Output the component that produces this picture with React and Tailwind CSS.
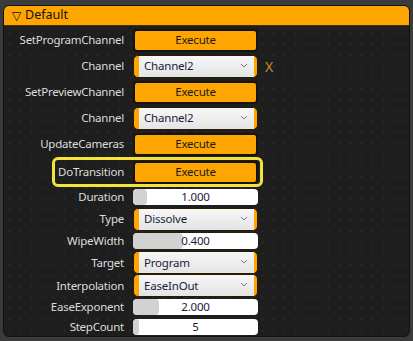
import React from "react";

const font = { fontFamily: '"Noto Sans", "Segoe UI", sans-serif' };

function Label({ children }) {
  return <div className="w-[120px] shrink-0 text-right text-[11.5px] tracking-[-0.25px] text-[#dcdcdc] leading-none">{children}</div>;
}

function ExecButton() {
  return (
    <div className="w-[125px] h-[23px] shrink-0 rounded-[4px] border-2 border-[#141414] bg-[#ffa500] flex items-center justify-center text-[11.5px] tracking-[-0.2px] text-[#1a1a1a]">
      Execute
    </div>
  );
}

function Dropdown({ value }) {
  return (
    <div className="w-[125px] h-[23px] shrink-0 rounded-[5px] bg-[#ffa500] border border-[#2a1a00] flex pl-[5px] pr-[3px]">
      <div className="flex-1 flex items-center justify-between bg-gradient-to-b from-[#f7f7f7] to-[#e4e4e4] pl-[5px] pr-[6px]">
        <span className="text-[11.5px] tracking-[-0.2px] text-[#1b1b3a]">{value}</span>
        <svg width="8" height="5" viewBox="0 0 8 5" className="mt-[-2px]">
          <path d="M1 1 L4 4 L7 1" fill="none" stroke="#777" strokeWidth="1" />
        </svg>
      </div>
    </div>
  );
}

function Slider({ value, fill }) {
  return (
    <div className="relative w-[125px] h-[16px] shrink-0 rounded-[4px] bg-white flex items-center justify-center overflow-hidden">
      <div className="absolute left-0 top-0 bottom-0 rounded-[4px] bg-[#d2d2d2]" style={{ width: fill }} />
      <span className="relative text-[11.5px] tracking-[-0.2px] text-[#1b1b3a]">{value}</span>
    </div>
  );
}

function Row({ h, label, children }) {
  return (
    <div className={`flex items-center gap-[9px] ${h}`}>
      <Label>{label}</Label>
      {children}
    </div>
  );
}

export default function App() {
  return (
    <div className="w-[413px] h-[341px] bg-[#3b3b3b] pt-[5px] pl-[3px]" style={font}>
      <div className="w-[407px] h-[332px] rounded-[6px] border border-[#121212] bg-[#1e1e1e] bg-[radial-gradient(circle,#272727_1px,transparent_1.3px)] bg-[size:11px_11px] overflow-hidden">
        <div className="h-[20px] bg-[#ffa500] flex items-center pl-[8px] text-[12.5px] text-[#111] border-b border-[#4a3000]">
          <span className="text-[12px] mr-[4px]">▽</span>Default
        </div>
        <div className="pt-[1px]">
          <Row h="h-[26px]" label="SetProgramChannel"><ExecButton /></Row>
          <Row h="h-[26px]" label="Channel">
            <Dropdown value="Channel2" />
            <span className="ml-[-2px] text-[14px] text-[#c98a1e]">X</span>
          </Row>
          <Row h="h-[26px]" label="SetPreviewChannel"><ExecButton /></Row>
          <Row h="h-[26px]" label="Channel"><Dropdown value="Channel2" /></Row>
          <Row h="h-[26px]" label="UpdateCameras"><ExecButton /></Row>
          <div className="h-[30px] flex items-center">
            <div className="ml-[48px] w-[211px] h-[30px] rounded-[6px] border-[3px] border-[#f2e43a] flex items-center justify-end gap-[9px] pr-[2px]">
              <span className="text-[11.5px] tracking-[-0.25px] text-[#dcdcdc] leading-none">DoTransition</span>
              <ExecButton />
            </div>
          </div>
          <Row h="h-[20px]" label="Duration"><Slider value="1.000" fill={14} /></Row>
          <Row h="h-[24px]" label="Type"><Dropdown value="Dissolve" /></Row>
          <Row h="h-[20px]" label="WipeWidth"><Slider value="0.400" fill={50} /></Row>
          <Row h="h-[23px]" label="Target"><Dropdown value="Program" /></Row>
          <Row h="h-[23px]" label="Interpolation"><Dropdown value="EaseInOut" /></Row>
          <Row h="h-[20px]" label="EaseExponent"><Slider value="2.000" fill={26} /></Row>
          <Row h="h-[20px]" label="StepCount"><Slider value="5" fill={6} /></Row>
        </div>
      </div>
    </div>
  );
}
